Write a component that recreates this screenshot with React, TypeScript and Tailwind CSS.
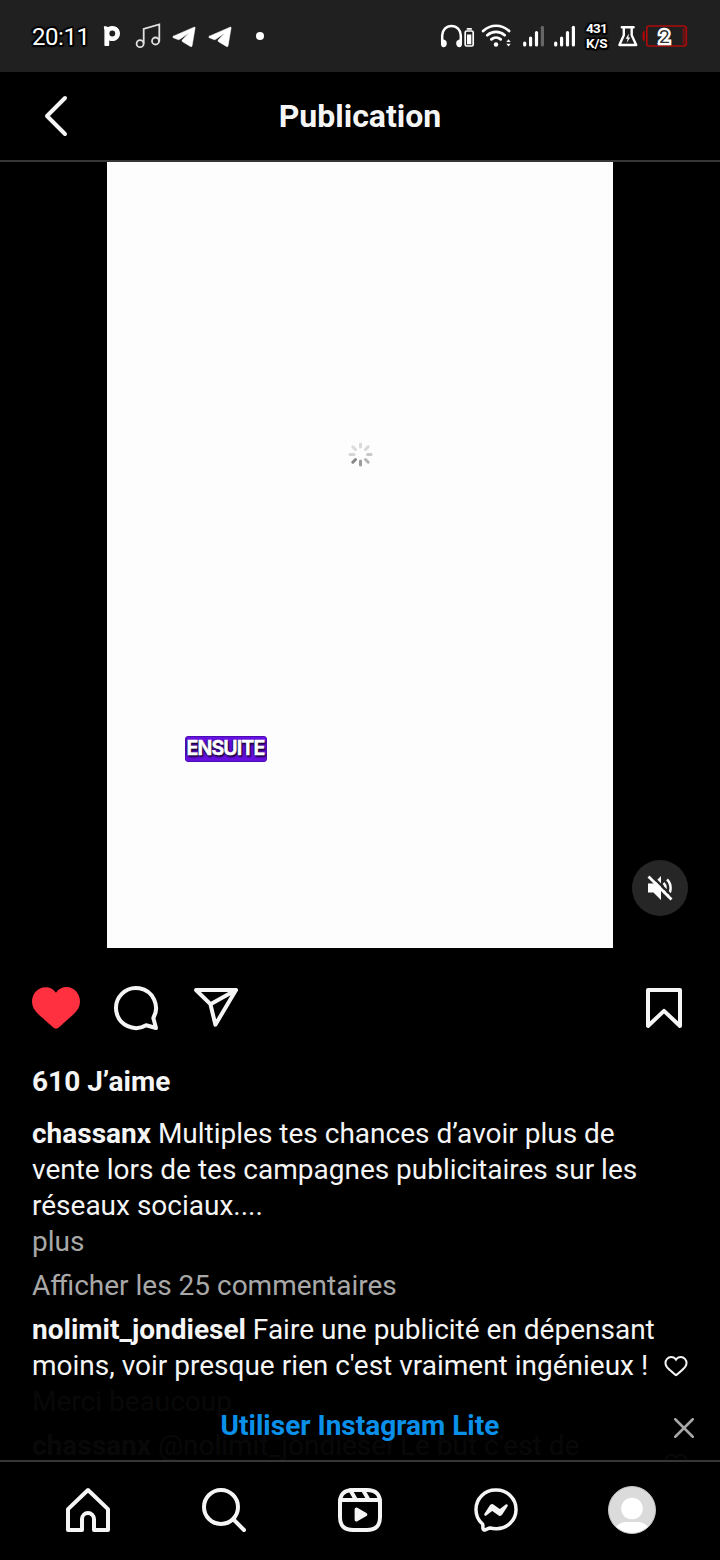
import type { ReactNode } from 'react';

function Icon({ children, className = 'size-12', viewBox = '0 0 24 24' }: { children: ReactNode; className?: string; viewBox?: string }) {
  return (
    <svg viewBox={viewBox} className={`block shrink-0 ${className}`} fill="none" stroke="currentColor" strokeWidth="2" strokeLinecap="round" strokeLinejoin="round">
      {children}
    </svg>
  );
}

const HEART_OUTLINE =
  'M16.792 3.904A4.989 4.989 0 0 1 21.5 9.122c0 3.072-2.652 4.959-5.197 7.222-2.512 2.243-3.865 3.469-4.303 3.752-.477-.309-2.143-1.823-4.303-3.752C5.141 14.072 2.5 12.167 2.5 9.122a4.989 4.989 0 0 1 4.708-5.218 4.21 4.21 0 0 1 3.675 1.941c.84 1.175.98 1.763 1.12 1.763s.278-.588 1.11-1.766a4.17 4.17 0 0 1 3.679-1.938m0-2a6.04 6.04 0 0 0-4.797 2.127 6.052 6.052 0 0 0-4.787-2.127A6.985 6.985 0 0 0 .5 9.122c0 3.61 2.55 5.827 5.015 7.97.283.246.569.494.853.747l1.027.918a44.998 44.998 0 0 0 3.518 3.018 2 2 0 0 0 2.174 0 45.263 45.263 0 0 0 3.626-3.115l.922-.824c.293-.26.59-.519.885-.774 2.334-2.025 4.98-4.32 4.98-7.94a6.985 6.985 0 0 0-6.708-7.218Z';

function CommentHeart() {
  return (
    <Icon className="size-6">
      <path d={HEART_OUTLINE} fill="currentColor" stroke="none" />
    </Icon>
  );
}

function Telegram() {
  return (
    <Icon className="h-7 w-9" viewBox="168 22 36 28">
      <path d="M173.300 36.200 194 27.200c.8-.3 1.200 0 1.100.8l-3 17.700c-.2 1-.9 1.200-1.700.7l-7.800-4.600c-.8-.6-.8-1.300-.2-2l6.600-6.800-9.200 6.300c-.7.5-1.300.5-2 .3l-4.500-1.900c-.7-.3-.8-.9 0-1.300Z" fill="currentColor" stroke="currentColor" strokeWidth=".5" />
    </Icon>
  );
}

function Signal({ weak }: { weak?: boolean }) {
  return (
    <Icon className="h-7 w-8" viewBox="516 22 32 28">
      <g strokeWidth="3.2">
        <path d="M524.7 43v2M530.6 38v7M536.5 32.5V45" />
        <path d="M542.4 27.3V45" stroke={weak ? '#666' : 'currentColor'} />
      </g>
    </Icon>
  );
}

function StatusBar() {
  return (
    <div className="flex h-[72px] shrink-0 bg-[#202020] pr-[30px] pl-8 pt-[22px] text-white">
      <div className="w-[60px] pt-px text-2xl leading-7 tracking-[-0.45px] whitespace-nowrap [text-shadow:0_0_2px_#000,2px_1px_1px_#000,-2px_-1px_1px_#000,1px_2px_1px_#000,-1px_2px_1px_#000,1px_-2px_1px_#000]">20:11</div>
      <Icon className="h-7 w-9" viewBox="92 22 36 28">
        <path d="M104 26.300c1.700-.5 3.200.3 4.300.8a7.600 7.600 0 1 1 .9 13.300V45c0 .6-.4 1-1 1H105c-.4 0-.6-.3-.6-.7V30.500c0-1.500-.9-2.500-.4-4.200Z" fill="currentColor" stroke="none" />
        <circle cx="112.300" cy="33.500" r="2.900" fill="#202020" stroke="none" />
      </Icon>
      <Icon className="h-7 w-10" viewBox="128 22 40 28">
        <g strokeWidth="1.8" stroke="#e0e0e0">
          <circle cx="140.1" cy="43.700" r="3.500" />
          <circle cx="155.500" cy="41" r="3.500" />
          <path d="M143.700 43V28.900l15.600-4.400V41" strokeLinejoin="miter" />
        </g>
      </Icon>
      <Telegram />
      <Telegram />
      <Icon className="h-7 w-10" viewBox="240 22 40 28">
        <circle cx="260" cy="36" r="4" fill="currentColor" stroke="none" />
      </Icon>
      <div className="ml-auto flex">
        <Icon className="h-7 w-[42px]" viewBox="436 22 42 28">
          <path d="M442.200 42v-6.500a9.300 9.600 0 0 1 18.600 0V42" strokeWidth="2.500" />
          <path d="M441.200 39.500c4.700-.3 5.600 1.800 5.600 3.900 0 2.400-1.600 3.800-3.200 3.800-1.800 0-2.600-1.500-2.600-3.200ZM461.800 39.500c-4.700-.3-5.600 1.800-5.600 3.900 0 2.400 1.600 3.800 3.200 3.800 1.800 0 2.600-1.500 2.600-3.200Z" fill="currentColor" stroke="none" />
          <rect x="465.200" y="31" width="8" height="15" rx="1.600" strokeWidth="1.700" />
          <path d="M467.500 28.900h3.600" strokeWidth="1.800" />
          <rect x="467" y="34.500" width="4.300" height="9.800" fill="currentColor" stroke="none" />
        </Icon>
        <Icon className="h-7 w-[38px]" viewBox="478 22 38 28">
          <g strokeWidth="2.700">
            <path d="M483.100 31c7.500-7 18.500-7 26 0M487.300 35.200c5-4.500 12.400-4.500 17.400 0M491.400 39.400c2.700-2.300 6.600-2.300 9.300 0" />
          </g>
          <circle cx="496" cy="44.500" r="2.200" fill="currentColor" stroke="none" />
          <path d="m506.300 42 2.200-2.800 2.200 2.800ZM506.300 43.800l2.200 2.800 2.200-2.800Z" fill="currentColor" stroke="none" />
        </Icon>
        <Signal weak />
        <div className="-ml-px mr-px"><Signal /></div>
        <div className="-mt-px flex w-8 flex-col pl-[6px] text-[13.5px] leading-[15px] font-bold whitespace-nowrap [text-shadow:0_0_2px_#000,2px_1px_1px_#000,-2px_-1px_1px_#000,1px_2px_1px_#000,-1px_2px_1px_#000,1px_-2px_1px_#000]">
          <span className="tracking-[-0.700px]">431</span>
          <span className="tracking-[-0.200px]">K/S</span>
        </div>
        <Icon className="h-7 w-[30px]" viewBox="612 22 30 28">
          <path d="M621.800 27.300h11.800M623.800 28v7.300l-4.400 9.700h16.800l-4.500-9.700V28" strokeWidth="2.400" />
          <path d="m629 33.500-3.400 5.300h2l-.9 4 3.600-5.200h-2Z" fill="currentColor" stroke="none" />
        </Icon>
        <div className="relative h-7 w-12">
          <Icon className="h-7 w-12" viewBox="642 22 48 28">
            <rect x="646.800" y="26" width="39.500" height="20" rx="2.500" stroke="#a90b0b" strokeWidth="1.700" />
            <path d="M644.700 31h-1c-.9 1-1.200 2.800-1.200 5s.3 4 1.200 5h1Z" fill="#b00" stroke="none" />
            <path d="M682.500 28h3v16.500h-3Z" fill="#681415" stroke="none" />
          </Icon>
          <span className="absolute top-px left-[17px] text-[19px] leading-7 font-normal [-webkit-text-stroke:4.500px_white] [paint-order:stroke_fill] text-[#333]">2</span>
        </div>
      </div>
    </div>
  );
}

function Spinner() {
  const spokes = [
    ['M12.5 5V2', '#dadada'], ['m17.5 7.5 2.7-2.7', '#d7d7d7'], ['M19.500 12.5H23', '#c8c8c8'], ['m17.5 17.5 2.7 2.7', '#b4b4b4'],
    ['M12.5 19v4', '#9c9c9c'], ['m7.5 17.5-2.7 2.7', '#858585'], ['M6 12.5H2', '#d5d5d5'], ['M7.5 7.5 4.8 4.8', '#dadada'],
  ];
  return (
    <Icon className="size-[25px]" viewBox="0 0 25 25">
      {spokes.map(([d, color]) => <path key={d} d={d} stroke={color} strokeWidth="3" />)}
    </Icon>
  );
}

function Media() {
  return (
    <div className="relative flex h-[786px] shrink-0 justify-center">
      <div className="w-[506px] bg-[#fefdfe]" />
      <div className="absolute top-[280px] left-[348px]"><Spinner /></div>
      <div className="absolute top-[574px] left-[185px] flex h-[26px] w-[82px] items-center justify-center rounded-[3px] border border-[#4a0cb4] bg-[#6710df] pr-px font-['Inter',sans-serif] text-[19.500px] leading-none font-bold tracking-[-0.900px] text-white [text-shadow:1px_1px_1px_#180036,1px_2px_2px_#180036,-1px_0_1px_#180036] [-webkit-text-stroke:0.400px_white]">ENSUITE</div>
      <div className="absolute top-[698px] right-8 flex size-14 items-center justify-center rounded-full bg-[#262626]">
        <Icon className="size-6 overflow-visible">
          <path d="M0 7.500h5.500L13 0v24l-7.500-7.500H0Z" fill="#fff" stroke="none" />
          <path d="M15.500 7c2.700 2.500 2.700 7.500 0 10M19 3.500c4.800 4.500 4.800 12.500 0 17" stroke="#fff" strokeWidth="2.500" strokeLinecap="butt" />
          <path d="m2-1.800 23.500 23.500" stroke="#262626" strokeWidth="2.400" strokeLinecap="butt" />
          <path d="m1.500 1.500 21 21" stroke="#fff" strokeWidth="2.800" strokeLinecap="square" />
        </Icon>
      </div>
    </div>
  );
}

function BottomNav() {
  return (
    <nav className="relative grid h-[100px] shrink-0 grid-cols-5 justify-items-center border-t-2 border-[#363636] bg-black px-5 pt-6">
      <Icon>
        <path d="M9.005 16.545a2.997 2.997 0 0 1 2.997-2.997A2.997 2.997 0 0 1 15 16.545V22h7V11.543L12 2 2 11.543V22h7.005Z" />
      </Icon>
      <Icon>
        <path d="M19 10.500A8.500 8.500 0 1 1 10.500 2a8.500 8.500 0 0 1 8.500 8.500ZM16.511 16.511 22 22" />
      </Icon>
      <Icon>
        <path d="M2.049 7.002H21.950M13.504 2.001l2.858 5.001M7.207 2.110l2.795 4.892" />
        <path d="M2 12.001v3.449c0 2.849.698 4.006 1.606 4.945.94.908 2.098 1.607 4.946 1.607h6.896c2.848 0 4.006-.699 4.946-1.607.908-.939 1.606-2.096 1.606-4.945V8.552c0-2.848-.698-4.006-1.606-4.945C19.454 2.699 18.296 2 15.448 2H8.552c-2.848 0-4.006.699-4.946 1.607C2.698 4.546 2 5.704 2 8.552Z" />
        <path d="M9.763 17.664a.908.908 0 0 1-.454-.787V11.630a.909.909 0 0 1 1.364-.788l4.545 2.624a.909.909 0 0 1 0 1.575l-4.545 2.624a.91.91 0 0 1-.91 0Z" fill="currentColor" stroke="none" />
      </Icon>
      <Icon>
        <path d="M12.003 2.001a9.705 9.705 0 1 1 0 19.400 10.876 10.876 0 0 1-2.895-.384.798.798 0 0 0-.533.040l-1.984.876a.801.801 0 0 1-1.123-.708l-.054-1.780a.806.806 0 0 0-.270-.569 9.490 9.490 0 0 1-3.140-7.175 9.650 9.650 0 0 1 10-9.700Z" strokeWidth="1.739" />
        <path d="M17.790 10.132a.659.659 0 0 0-.962-.873l-2.556 2.050a.63.63 0 0 1-.758.002L11.060 9.470a1.576 1.576 0 0 0-2.277.420l-2.567 3.980a.659.659 0 0 0 .961.875l2.556-2.049a.63.63 0 0 1 .759-.002l2.452 1.840a1.576 1.576 0 0 0 2.278-.420Z" fill="currentColor" stroke="none" />
      </Icon>
      <div className="size-12 overflow-hidden rounded-full border border-[#c4c4c4] bg-[#dbdbdb]">
        <Icon className="size-full" viewBox="1 1 46 46">
          <g fill="#fff" stroke="none">
            <circle cx="24" cy="22.500" r="10.800" />
            <path d="M7 48v-5c2-5 7-7 11-7h12c4 0 9 2 11 7v5Z" />
          </g>
        </Icon>
      </div>
    </nav>
  );
}

export default function App() {
  return (
    <div className="flex h-[1560px] w-[720px] flex-col overflow-hidden bg-black font-['Roboto',sans-serif] text-[28px] leading-9 text-[#f5f5f5]">
      <StatusBar />
      <header className="grid h-[90px] shrink-0 grid-cols-[1fr_auto_1fr] items-center border-b-2 border-[#363636] px-8">
        <Icon>
          <path d="M16.500 3 7.500 12l9 9" />
        </Icon>
        <h1 className="text-[32px] font-bold">Publication</h1>
      </header>
      <Media />
      <main className="relative flex min-h-0 flex-1 flex-col overflow-hidden px-8 pt-9">
        <div className="flex shrink-0 gap-8">
          <svg viewBox="0 0 48 48" className="size-12" fill="#ff3040">
            <path d="M34.600 3.100c-4.500 0-7.900 1.800-10.600 5.600-2.700-3.700-6.100-5.500-10.600-5.500C6 3.100 0 9.600 0 17.600c0 7.300 5.400 12 10.600 16.500.6.5 1.300 1.100 1.900 1.700l2.300 2c4.400 3.900 6.600 5.900 7.600 6.500.5.3 1.100.5 1.600.5s1.100-.2 1.600-.5c1-.6 2.800-2.200 7.800-6.800l2-1.800c.7-.6 1.300-1.200 2-1.700C42.700 29.600 48 25 48 17.600c0-8-6-14.500-13.400-14.500z" />
          </svg>
          <Icon><path d="M20.656 17.008a9.993 9.993 0 1 0-3.590 3.615L22 22Z" /></Icon>
          <Icon><path d="M22 3 9.218 10.083M11.698 20.334 22 3.001H2l7.218 7.083Z" /></Icon>
          <div className="ml-auto"><Icon><path d="m20 21-8-7.560L4 21V3h16Z" /></Icon></div>
        </div>
        <div className="mt-8 shrink-0 font-bold">610 J’aime</div>
        <div className="mt-4 shrink-0 whitespace-nowrap">
          <p><b className="font-bold">chassanx</b> Multiples tes chances d’avoir plus de<br />vente lors de tes campagnes publicitaires sur les<br />réseaux sociaux....</p>
          <p className="text-[#a8a8a8]">plus</p>
        </div>
        <p className="mt-2 shrink-0 text-[#a8a8a8]">Afficher les 25 commentaires</p>
        <div className="mt-2 flex shrink-0 items-center justify-between whitespace-nowrap">
          <p><b className="font-bold">nolimit_jondiesel</b> Faire une publicité en dépensant<br />moins, voir presque rien c'est vraiment ingénieux !<br />Merci beaucoup</p>
          <div className="-ml-6"><CommentHeart /></div>
        </div>
        <div className="mt-2 flex shrink-0 items-start justify-between whitespace-nowrap">
          <p><b className="font-bold">chassanx</b> @nolimit_jondiesel Le but c’est de</p>
          <div className="mt-6"><CommentHeart /></div>
        </div>
        <div className="absolute inset-x-0 bottom-0 flex h-[72px] items-center justify-center bg-black/97 pt-1 font-bold text-[#0a90e9]">
          <span>Utiliser Instagram Lite</span>
          <span className="absolute top-[30px] right-[26px] text-[#a8a8a8]">
            <Icon className="size-5"><path d="m1.500 1.500 21 21m0-21-21 21" strokeWidth="3" /></Icon>
          </span>
        </div>
      </main>
      <BottomNav />
    </div>
  );
}
